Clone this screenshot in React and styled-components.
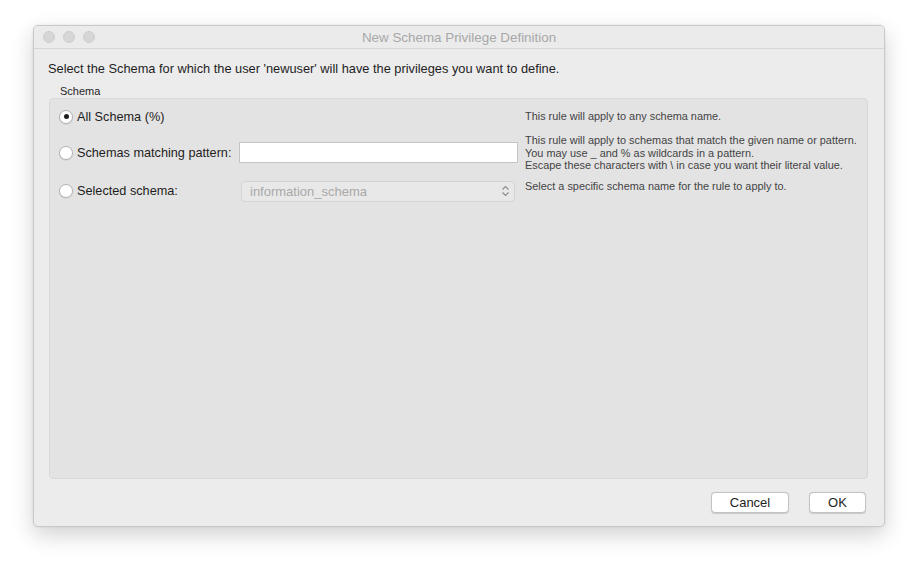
import React from 'react'
import styled, { createGlobalStyle } from 'styled-components'

const GlobalStyle = createGlobalStyle`
    html, body {
        margin: 0;
        padding: 0;
        background: #ffffff;
        font-family: "Liberation Sans", Arial, sans-serif;
    }
`

const Page = styled.div`
    width: 918px;
    height: 568px;
    padding: 25px 0 0 33px;
    box-sizing: border-box;
`

const Window = styled.div`
    width: 852px;
    height: 502px;
    background: #ececec;
    border-radius: 5px;
    border: 1px solid #c9c9c9;
    box-sizing: border-box;
    box-shadow: 0 8px 22px rgba(0, 0, 0, 0.18), 0 0 3px rgba(0, 0, 0, 0.08);
    display: flex;
    flex-direction: column;
    overflow: hidden;
`

const TitleBar = styled.div`
    height: 22px;
    flex-shrink: 0;
    background: #ebebeb;
    border-bottom: 1px solid #d6d6d6;
    display: flex;
    align-items: center;
    position: relative;
    padding-left: 9px;
    gap: 8px;
`

const Light = styled.span`
    width: 12px;
    height: 12px;
    border-radius: 50%;
    background: #d6d6d6;
    border: 1px solid #cdcdcd;
    box-sizing: border-box;
`

const Title = styled.div`
    position: absolute;
    left: 0;
    right: 0;
    text-align: center;
    font-size: 13.4px;
    color: #a8a8a8;
`

const Body = styled.div`
    flex: 1;
    display: flex;
    flex-direction: column;
    padding: 12px 16px 12px 14px;
`

const Intro = styled.div`
    font-size: 12.8px;
    color: #1e1e1e;
`

const GroupLabel = styled.div`
    font-size: 11px;
    color: #262626;
    margin: 9px 0 1px 12px;
`

const Group = styled.div`
    height: 381px;
    margin-left: 1px;
    background: #e3e3e3;
    border: 1px solid #d8d8d8;
    border-radius: 4px;
    box-sizing: border-box;
    display: grid;
    grid-template-columns: 180px 281px 1fr;
    grid-auto-rows: min-content;
    align-items: start;
    padding: 7px 0 0 9px;
`

const OptionCell = styled.label`
    display: flex;
    align-items: center;
    gap: 4px;
    font-size: 12.7px;
    color: #1e1e1e;
    height: ${p => p.h}px;
    margin-top: ${p => p.mt || 0}px;
`

const Radio = styled.span`
    width: 14px;
    height: 14px;
    border-radius: 50%;
    background: #ffffff;
    border: 1px solid #b5b5b5;
    box-sizing: border-box;
    display: flex;
    align-items: center;
    justify-content: center;
    box-shadow: 0 0.5px 1px rgba(0, 0, 0, 0.12);

    &::after {
        content: '';
        width: 5px;
        height: 5px;
        border-radius: 50%;
        background: ${p => p.checked ? '#1f1f1f' : 'transparent'};
    }
`

const FieldCell = styled.div`
    display: flex;
    align-items: center;
    padding-left: ${p => p.pl || 0}px;
    margin-top: ${p => p.mt || 0}px;
`

const TextInput = styled.input`
    width: 279px;
    height: 21px;
    box-sizing: border-box;
    border: 1px solid #c4c4c4;
    background: #ffffff;
    outline: none;
    font-size: 13px;
    padding: 0 4px;
`

const SelectBox = styled.div`
    width: 274px;
    height: 21px;
    box-sizing: border-box;
    border: 1px solid #d3d3d3;
    border-radius: 4px;
    background: #e8e8e8;
    display: flex;
    align-items: center;
    justify-content: space-between;
    padding: 0 4px 0 8px;
    font-size: 13px;
    color: #a9a9a9;
`

const Note = styled.div`
    font-size: 10.9px;
    line-height: 12.5px;
    color: #444444;
    padding-left: 5px;
    white-space: pre-line;
    margin-top: ${p => p.mt || 0}px;
`

const Footer = styled.div`
    display: flex;
    justify-content: flex-end;
    gap: 20px;
    margin-top: 13px;
    padding-right: 2px;
`

const Button = styled.button`
    width: ${p => p.w}px;
    height: 21px;
    background: #ffffff;
    border: 1px solid #c2c2c2;
    border-radius: 4px;
    box-shadow: 0 0.5px 1px rgba(0, 0, 0, 0.15);
    font-family: "Liberation Sans", Arial, sans-serif;
    font-size: 13px;
    color: #1e1e1e;
    padding: 0;
`

const Chevrons = () => (
    <svg width="9" height="12" viewBox="0 0 9 12">
        <path d="M1.5 4.5 L4.5 1.5 L7.5 4.5 M1.5 7.5 L4.5 10.5 L7.5 7.5" fill="none" stroke="#8a8a8a" strokeWidth="1.1" />
    </svg>
)

export default function App () {
    return (
        <>
        <GlobalStyle />
        <Page>
            <Window>
                <TitleBar>
                    <Light />
                    <Light />
                    <Light />
                    <Title>New Schema Privilege Definition</Title>
                </TitleBar>
                <Body>
                    <Intro>Select the Schema for which the user 'newuser' will have the privileges you want to define.</Intro>
                    <GroupLabel>Schema</GroupLabel>
                    <Group>
                        <OptionCell h={19} mt={1}>
                            <Radio checked />
                            All Schema (%)
                        </OptionCell>
                        <div />
                        <Note mt={4}>This rule will apply to any schema name.</Note>

                        <OptionCell h={21} mt={16}>
                            <Radio />
                            Schemas matching pattern:
                        </OptionCell>
                        <FieldCell mt={16}>
                            <TextInput />
                        </FieldCell>
                        <Note mt={8}>{'This rule will apply to schemas that match the given name or pattern.\nYou may use _ and % as wildcards in a pattern.\nEscape these characters with \\ in case you want their literal value.'}</Note>

                        <OptionCell h={21} mt={9}>
                            <Radio />
                            Selected schema:
                        </OptionCell>
                        <FieldCell mt={9} pl={2}>
                            <SelectBox>
                                information_schema
                                <Chevrons />
                            </SelectBox>
                        </FieldCell>
                        <Note mt={8}>Select a specific schema name for the rule to apply to.</Note>
                    </Group>
                    <Footer>
                        <Button w={78}>Cancel</Button>
                        <Button w={57}>OK</Button>
                    </Footer>
                </Body>
            </Window>
        </Page>
        </>
    )
}
